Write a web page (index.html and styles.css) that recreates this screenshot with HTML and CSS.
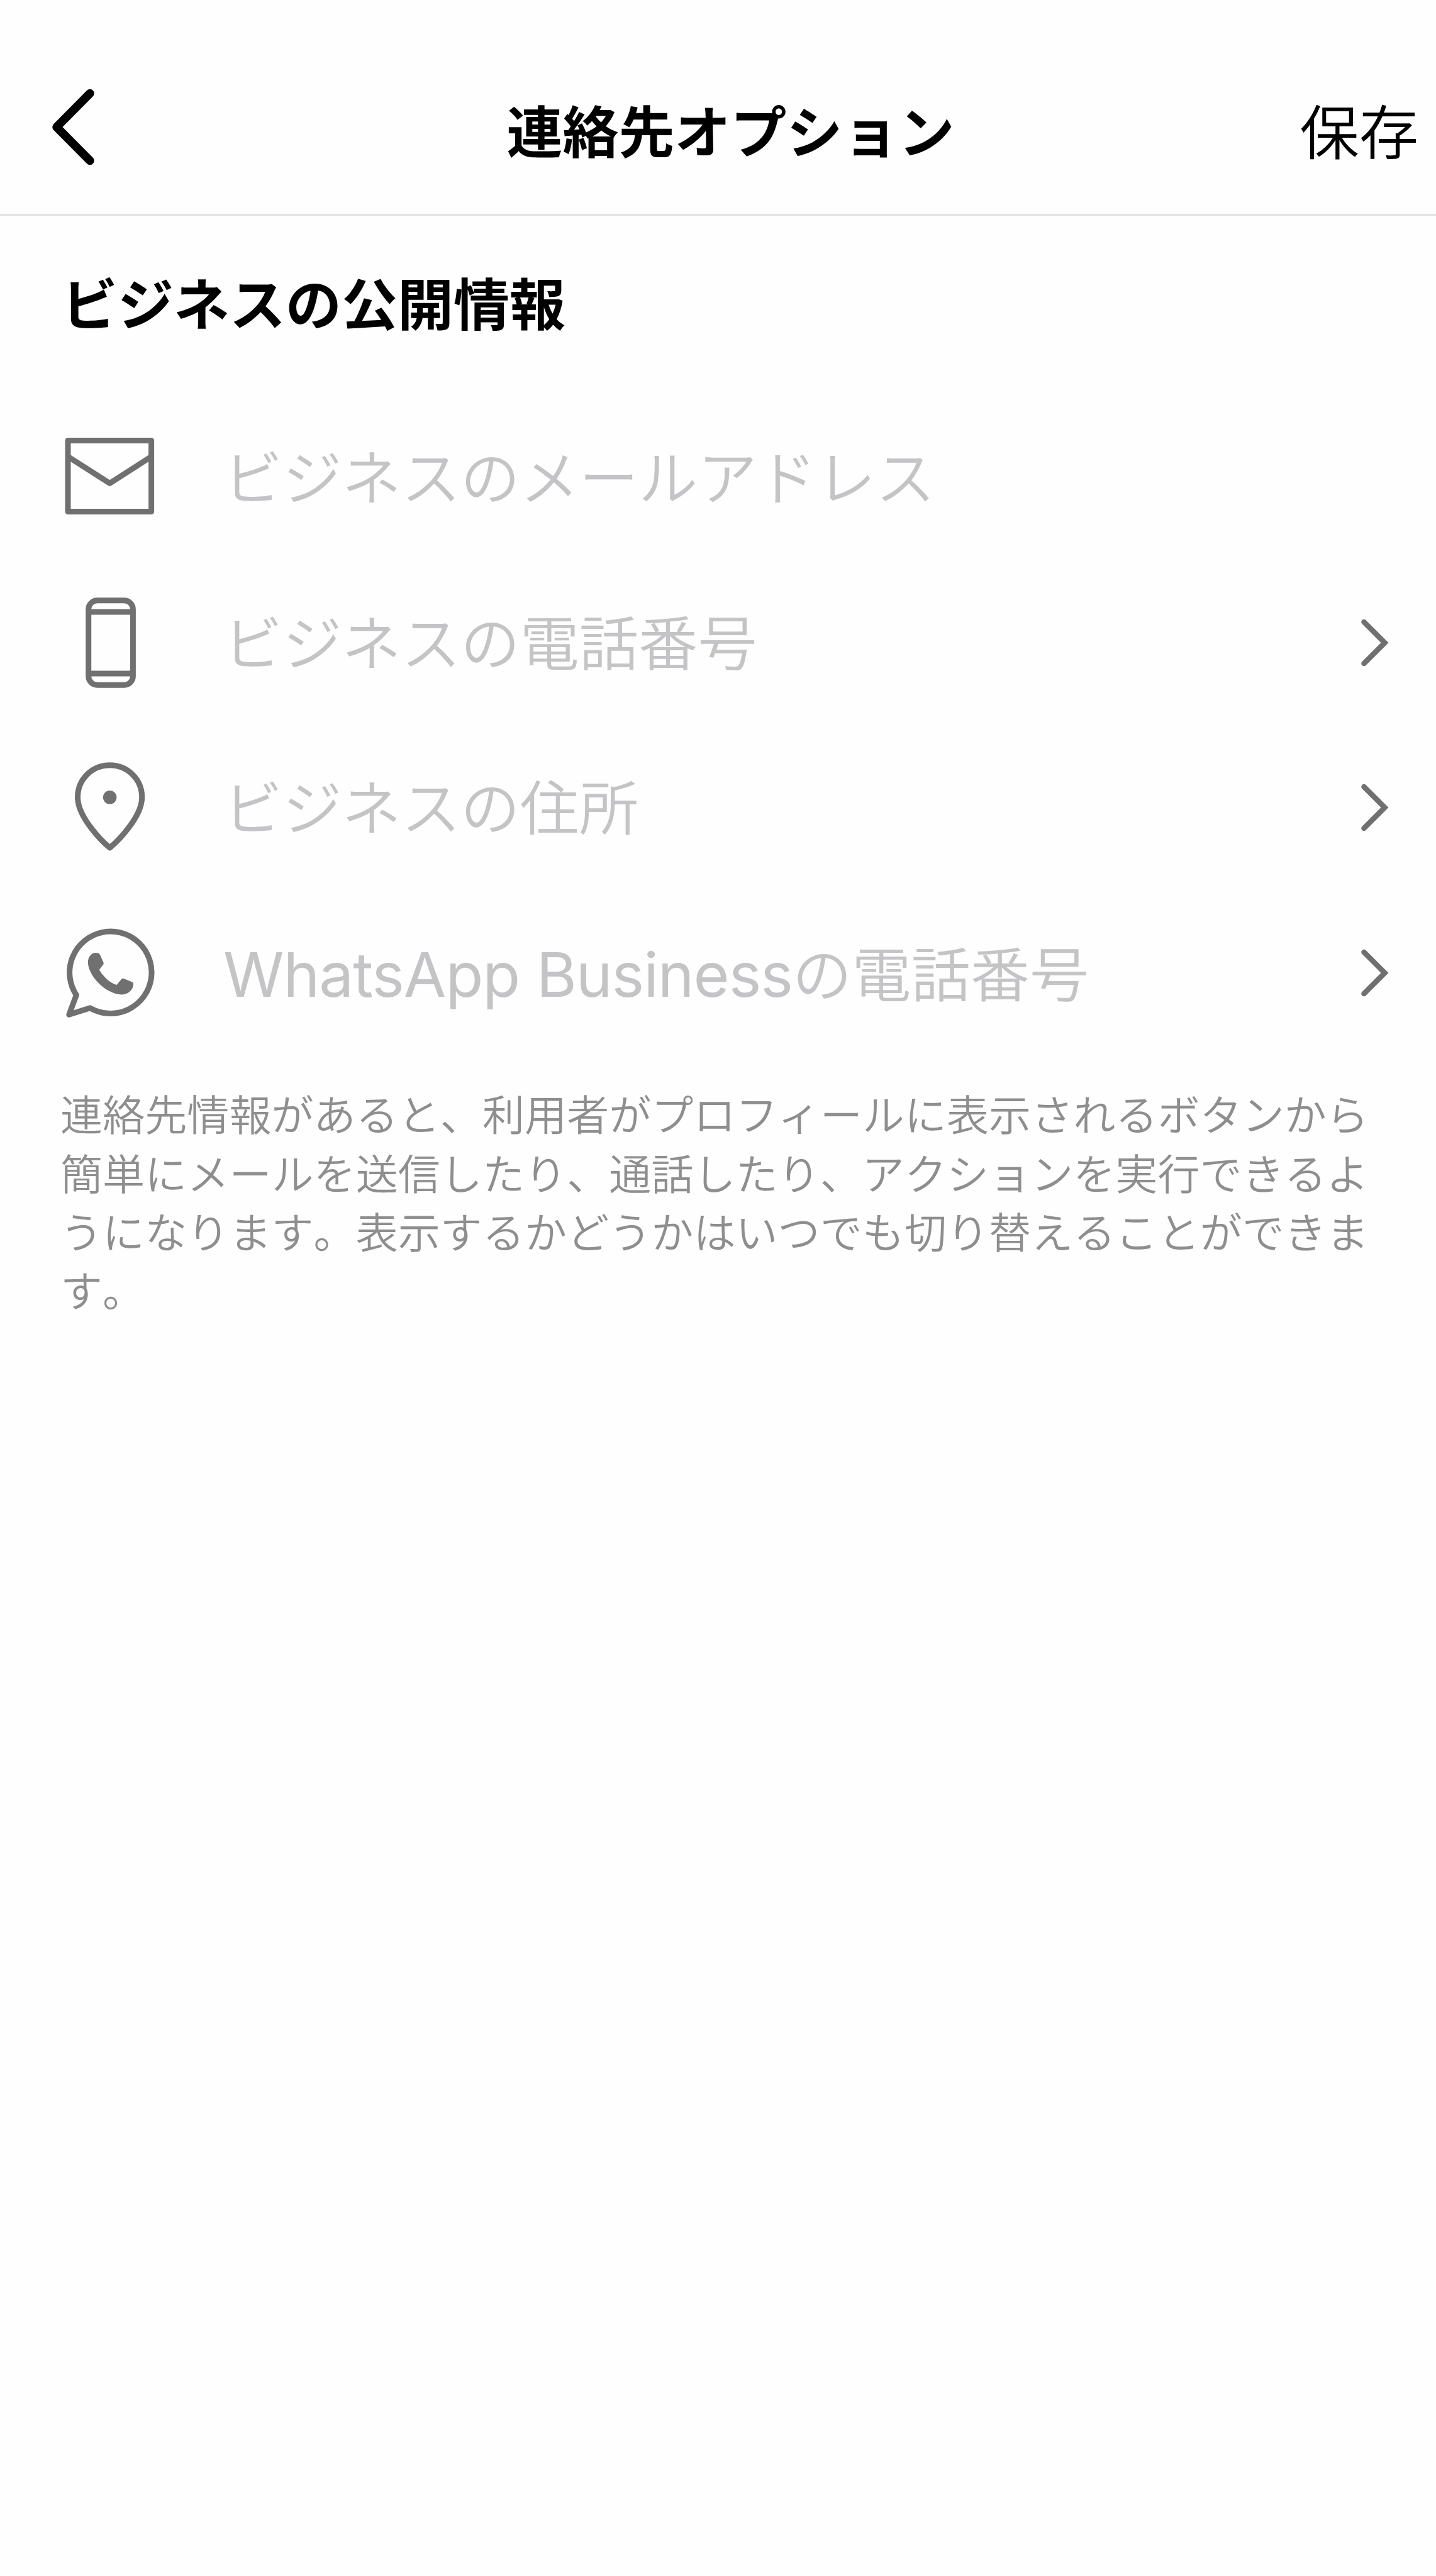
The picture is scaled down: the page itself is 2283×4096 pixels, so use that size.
FILE: index.html
```html
<!DOCTYPE html>
<html lang="ja">
<head>
<meta charset="UTF-8">
<meta name="viewport" content="width=device-width, initial-scale=1.0">
<title>連絡先オプション</title>
<link rel="stylesheet" href="styles.css">
</head>
<body>
<header class="header">
  <a class="back" href="#" aria-label="戻る">
    <svg class="back-icon" width="80" height="130" viewBox="0 0 80 130">
      <path d="M63 11.5 L10 65 L63 118.5"/>
    </svg>
  </a>
  <h1 class="title">連絡先オプション</h1>
  <a class="save" href="#">保存</a>
</header>

<main class="content">
  <h2 class="section-title">ビジネスの公開情報</h2>

  <ul class="options">
    <li class="option">
      <svg class="icon" width="150" height="150" viewBox="0 0 150 150">
        <path d="M8 16.5 H140.6 V129.5 H8 Z M8 42 L74.5 84.5 L140.6 42"/>
      </svg>
      <span class="label">ビジネスのメールアドレス</span>
    </li>
    <li class="option">
      <svg class="icon" width="150" height="150" viewBox="0 0 150 150">
        <rect x="40.7" y="7.8" width="70.7" height="134.4" rx="14"/>
        <path d="M40.7 25.9 H111.4 M40.7 124.1 H111.4"/>
      </svg>
      <span class="label">ビジネスの電話番号</span>
      <svg class="arrow" width="44" height="80" viewBox="0 0 44 80">
        <path d="M4.5 7 L37.5 40 L4.5 73"/>
      </svg>
    </li>
    <li class="option">
      <svg class="icon" width="150" height="150" viewBox="0 0 150 150">
        <path d="M74.6 139 C64 130.500 23.500 91 23.500 58.800 C23.500 30 46.500 7.800 74.600 7.800 C102.700 7.800 125.700 30 125.700 58.800 C125.700 91 85 130.500 74.600 139 Z"/>
        <circle class="fill" cx="74.6" cy="58.8" r="10.8"/>
      </svg>
      <span class="label">ビジネスの住所</span>
      <svg class="arrow" width="44" height="80" viewBox="0 0 44 80">
        <path d="M4.5 7 L37.5 40 L4.5 73"/>
      </svg>
    </li>
    <li class="option">
      <svg class="icon" width="150" height="150" viewBox="0 0 150 150">
        <path d="M21.4 110.200 A65.200 65.200 0 1 1 43.300 130.800 L9.800 141.300 Z"/>
        <path class="fill" d="M51.500 43 C55 42.600 58 43.500 59.300 46.700 L64.500 58.500 C65 60.500 64.500 61.500 63.500 62.500 L57.800 70 C64 80.500 74 90.500 85.500 94 L93 85 C94.500 83.500 96 83.500 97.500 84.300 L110.500 89.800 C112 90.500 112.300 92 112 94 C111 103 103 109 94 109.500 C67 109 39.500 78.500 39.800 57.500 C40 50 45 43.500 51.500 43 Z"/>
      </svg>
      <span class="label with-latin"><span class="latin">WhatsApp Business</span>の電話番号</span>
      <svg class="arrow" width="44" height="80" viewBox="0 0 44 80">
        <path d="M4.5 7 L37.5 40 L4.5 73"/>
      </svg>
    </li>
  </ul>

  <p class="note">連絡先情報があると、利用者がプロフィールに表示されるボタンから簡単にメールを送信したり、通話したり、アクションを実行できるようになります。表示するかどうかはいつでも切り替えることができます。</p>
</main>
</body>
</html>
```

FILE: styles.css
```css
* {
  box-sizing: border-box;
}

body {
  margin: 0;
  min-height: 100vh;
  background: #fefefe;
  color: #000;
  font-family: "Noto Sans CJK JP", sans-serif;
  font-weight: 350;
  font-kerning: none;
}

svg {
  display: block;
  flex: none;
  fill: none;
}

/* top bar */
.header {
  display: grid;
  grid-template-columns: 1fr auto 1fr;
  align-items: center;
  height: 343px;
  padding: 80px 28px 0 80px;
  border-bottom: 3px solid #e2e2e2;
}

.back-icon {
  stroke: #000;
  stroke-width: 13.5;
  stroke-linecap: round;
  stroke-linejoin: round;
  margin-bottom: 17px;
}

.title {
  margin: 0 12px 10px 0;
  font-size: 89px;
  font-weight: bold;
  line-height: 100px;
}

.save {
  justify-self: end;
  margin-bottom: 10px;
  font-size: 94.3px;
  line-height: 100px;
  color: #000;
  text-decoration: none;
}

/* contact options */
.content {
  padding: 86px 70px 0 98px;
}

.section-title {
  margin: 0;
  font-size: 89px;
  font-weight: bold;
  line-height: 100px;
}

.options {
  list-style: none;
  margin: 99px 0 0;
  padding: 0;
}

.option {
  display: flex;
  align-items: center;
  height: 262.6px;
}

.icon {
  margin-left: 2px;
  stroke: #707070;
  stroke-width: 9;
  stroke-linejoin: round;
}

.icon .fill {
  fill: #707070;
  stroke: none;
}

.label {
  flex: 1;
  margin-left: 105px;
  padding-bottom: 10px;
  font-size: 94.3px;
  line-height: 100px;
  color: #c4c4c6;
  white-space: nowrap;
}

.with-latin {
  padding-bottom: 0;
}

.latin {
  font-family: Inter, sans-serif;
  font-size: 98px;
  font-weight: 400;
  font-kerning: normal;
  letter-spacing: -1.1px;
}

.arrow {
  stroke: #707070;
  stroke-width: 8.5;
  stroke-linecap: round;
  margin-right: 5px;
}

.note {
  width: 2085px;
  margin: 44px 0 0 -2px;
  font-size: 67.1px;
  line-height: 93.2px;
  color: #8e8e8e;
}
```
